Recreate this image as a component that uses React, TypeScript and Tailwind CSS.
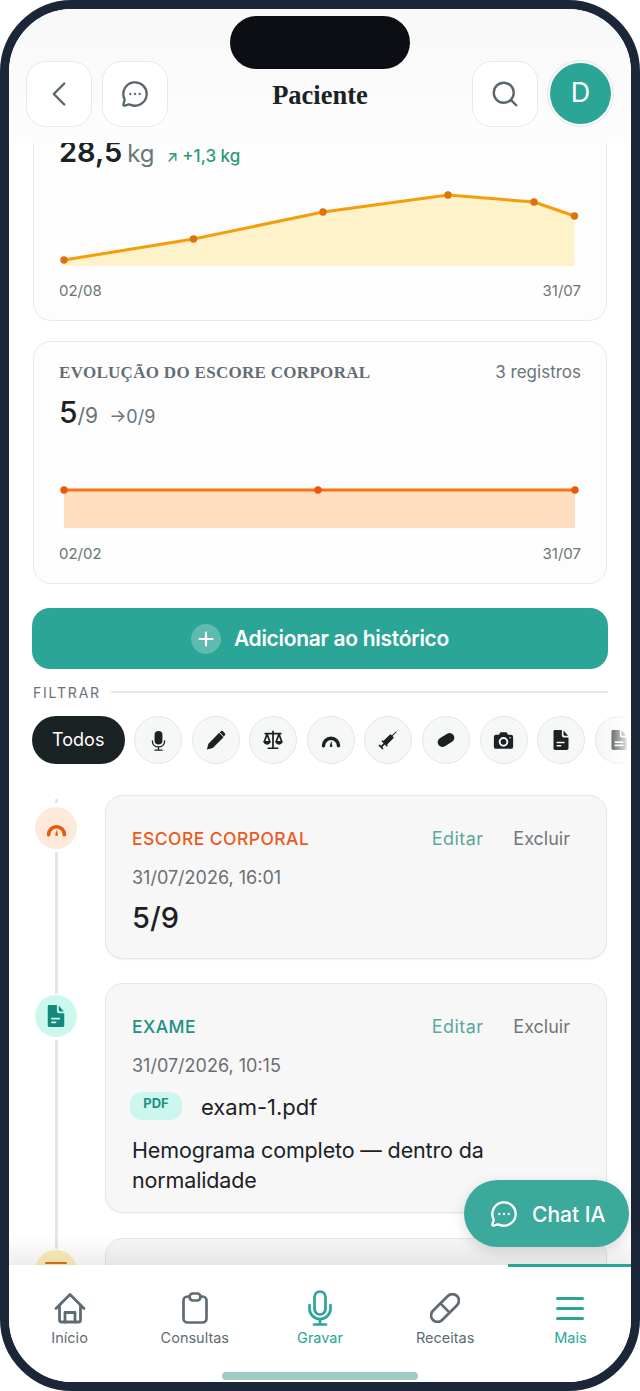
import React from "react";
import { ChevronLeft, MessageCircleMore, Search } from "lucide-react";

const sans = "font-['Inter','Noto_Sans',sans-serif]";

function Chart({ pts, w, h, base, stroke, fill, dot }: { pts: number[][]; w: number; h: number; base: number; stroke: string; fill: string; dot: string }) {
  const line = pts.map((p) => p.join(",")).join(" ");
  const area = `${pts[0][0]},${base} ${line} ${pts[pts.length - 1][0]},${base}`;
  return (
    <svg width={w} height={h} viewBox={`0 0 ${w} ${h}`} className="block">
      <polygon points={area} fill={fill} />
      <polyline points={line} fill="none" stroke={stroke} strokeWidth="3" />
      {pts.map((p, i) => (
        <circle key={i} cx={p[0]} cy={p[1]} r="3.7" fill={dot} />
      ))}
    </svg>
  );
}

const ic = "#1c2224";
const MicIcon = () => (
  <svg width="21" height="21" viewBox="0 0 24 24" fill="none">
    <rect x="7.5" y="1" width="9" height="15.5" rx="4.5" fill={ic} />
    <path d="M5 12.5c0 4 3 6.8 7 6.8s7-2.8 7-6.8M12 19.5v3M8 23h8" stroke={ic} strokeWidth="1.5" strokeLinecap="round" />
  </svg>
);
const PenIcon = () => (
  <svg width="23" height="23" viewBox="0 0 24 24">
    <path d="M3 21.5l1.6-6.2L15.8 4l4.6 4.6L9.2 19.8z" fill={ic} />
    <path d="M17.3 2.6a2 2 0 0 1 2.8 0l1.5 1.5a2 2 0 0 1 0 2.8l-.9.9-4.3-4.3z" fill={ic} />
  </svg>
);
const ScaleIcon = () => (
  <svg width="22" height="22" viewBox="0 0 24 24" fill="none" stroke={ic} strokeWidth="1.9" strokeLinejoin="round" strokeLinecap="round">
    <path d="M12 2.5v18M7 21h10M3.5 5h17" />
    <path d="M5.5 5.5L2.5 14h6zM18.5 5.5l-3 8.5h6z" />
    <path d="M2.5 14c.5 1.6 1.6 2.3 3 2.3s2.5-.7 3-2.3M15.5 14c.5 1.6 1.6 2.3 3 2.3s2.5-.7 3-2.3" fill={ic} />
  </svg>
);
const GaugeIcon = ({ c = ic, s = 20 }: { c?: string; s?: number }) => (
  <svg width={s} height={s} viewBox="0 0 24 24" fill="none">
    <path d="M3 19a9 9 0 0 1 18 0" stroke={c} strokeWidth="4.2" strokeLinecap="round" />
    <path d="M12.5 13l1 5.5a1.5 1.5 0 1 1-2.8 0z" fill={c} />
  </svg>
);
const SyringeIcon = () => (
  <svg width="24" height="24" viewBox="0 0 24 24" fill={ic}>
    <g transform="rotate(45 12 12)">
      <rect x="11.5" y="0" width="1" height="7" />
      <rect x="9.4" y="6" width="5.2" height="11" rx="1" />
      <rect x="8" y="16" width="8" height="1.5" rx="0.7" />
      <rect x="11.1" y="17" width="1.8" height="5" />
      <rect x="9" y="21" width="6" height="1.7" rx="0.8" />
    </g>
  </svg>
);
const PillIcon = () => (
  <svg width="24" height="24" viewBox="0 0 24 24">
    <rect x="3" y="7.3" width="18" height="9.4" rx="4.7" transform="rotate(-32 12 12)" fill={ic} />
  </svg>
);
const CameraIcon = () => (
  <svg width="21" height="21" viewBox="0 0 24 24">
    <path fillRule="evenodd" d="M8.5 2.5h7l1.8 3h3.2a2.5 2.5 0 0 1 2.5 2.5v11a2.5 2.5 0 0 1-2.5 2.5h-17A2.5 2.5 0 0 1 1 19V8a2.5 2.5 0 0 1 2.5-2.5h3.2zM12 8a5.5 5.5 0 1 0 0 11 5.5 5.5 0 0 0 0-11zm0 2.2a3.3 3.3 0 1 1 0 6.6 3.3 3.3 0 0 1 0-6.600zM19.5 8a.9.9 0 1 0 0 1.8.9.9 0 0 0 0-1.800z" fill={ic} />
  </svg>
);
const DocIcon = ({ c = ic, lines = 1, line = "#f5f6f6", w = 20, h = 22 }: { c?: string; lines?: number; line?: string; w?: number; h?: number }) => (
  <svg width={w} height={h} viewBox="0 0 24 26">
    <path d="M4.5 1H13v6.5a2.5 2.5 0 0 0 2.5 2.5H21v13a2 2 0 0 1-2 2H5a2 2 0 0 1-2-2V2.500A1.500 1.500 0 0 1 4.500 1z" fill={c} />
    <path d="M15 1.500L20.500 8h-4a1.500 1.500 0 0 1-1.500-1.500z" fill={c} />
    {lines === 1 ? (
      <>
        <rect x="6.5" y="15" width="10" height="1.8" rx="0.9" fill={line} />
        <rect x="6.5" y="19" width="6" height="1.8" rx="0.9" fill={line} />
      </>
    ) : (
      <>
        <rect x="6.5" y="14.5" width="11" height="2" rx="1" fill={line} />
        <rect x="6.5" y="18.5" width="11" height="2" rx="1" fill={line} />
      </>
    )}
  </svg>
);

const HomeIcon = () => (
  <svg width="32" height="32" viewBox="0 0 32 32" fill="none" stroke="currentColor" strokeWidth="2.8" strokeLinecap="round" strokeLinejoin="round">
    <path d="M2 16.5L16 2.500l14 14" />
    <path d="M5.5 13.5V28a2 2 0 0 0 2 2h17a2 2 0 0 0 2-2V13.500" />
    <path d="M11 30v-9.500h10V30" />
  </svg>
);
const ClipIcon = () => (
  <svg width="26" height="32" viewBox="0 0 26 32" fill="none" stroke="currentColor" strokeWidth="2.7" strokeLinejoin="round">
    <rect x="1.5" y="4.5" width="23" height="26" rx="4" />
    <rect x="7.5" y="1.5" width="11" height="7" rx="3.5" fill="#fff" />
  </svg>
);
const MicNav = () => (
  <svg width="24" height="36" viewBox="0 0 24 36" fill="none" stroke="currentColor" strokeWidth="2.7" strokeLinecap="round" strokeLinejoin="round">
    <rect x="6.5" y="1.5" width="11" height="23" rx="5.5" />
    <path d="M1.5 15v3.500a10.500 10.500 0 0 0 21 0V15" />
    <path d="M12 29v5M6 34.500h12" />
  </svg>
);
const PillNav = () => (
  <svg width="30" height="30" viewBox="0 0 30 30" fill="none" stroke="currentColor" strokeWidth="2.7">
    <rect x="-2" y="8.5" width="34" height="13" rx="6.5" transform="rotate(-45 15 15)" />
    <path d="M10.4 10.4l9.2 9.2" />
  </svg>
);
const MenuNav = () => (
  <svg width="28" height="23" viewBox="0 0 28 23" fill="currentColor">
    <rect x="0" y="0" width="28" height="3" rx="1.5" />
    <rect x="0" y="10" width="28" height="3" rx="1.5" />
    <rect x="0" y="20" width="28" height="3" rx="1.5" />
  </svg>
);

const Chip = ({ children }: { children: React.ReactNode }) => (
  <div className="w-12 h-12 shrink-0 rounded-full bg-[#f6f7f7] border border-[#e6e6e6] flex items-center justify-center">{children}</div>
);

function EntryHead({ label, color }: { label: string; color: string }) {
  return (
    <div className="flex items-center h-6">
      <span className={`text-[17.5px] font-medium tracking-[0.45px] ${color}`}>{label}</span>
      <span className="ml-auto -mt-[2px] text-[18px] tracking-[0.4px] text-[#5aa89e]">Editar</span>
      <span className="ml-[30px] mr-[10px] -mt-[2px] text-[18px] text-[#737678]">Excluir</span>
    </div>
  );
}

function NavItem({ icon, label, active }: { icon: React.ReactNode; label: string; active?: boolean }) {
  return (
    <div className={`flex-1 flex flex-col items-center pt-[25px] ${active ? "text-[#2aa596]" : "text-[#5f6b73]"}`}>
      <div className="h-[36px] flex items-center justify-center">{icon}</div>
      <span className="text-[14.5px] leading-[18px] mt-[3px]">{label}</span>
    </div>
  );
}

export default function App() {
  return (
    <div className={`w-[640px] h-[1391px] bg-white relative overflow-hidden ${sans}`}>
      <div className="absolute inset-0 rounded-[72px] border-[9px] border-[#1c2639] overflow-hidden flex flex-col bg-white">
        {/* Header */}
        <div className="h-[134px] shrink-0 bg-gradient-to-b from-[#f8f8f8] to-[#fdfdfd] flex items-start pl-[17px] pr-[17px] pt-[52px] z-10">
          <div className="w-[66px] h-[66px] rounded-[20px] bg-white border border-[#e8e8e8] flex items-center justify-center text-[#59666e]">
            <ChevronLeft size={42} strokeWidth={1.4} />
          </div>
          <div className="ml-[10px] w-[66px] h-[66px] rounded-[20px] bg-white border border-[#e8e8e8] flex items-center justify-center text-[#59666e]">
            <MessageCircleMore size={28} strokeWidth={2} />
          </div>
          <div className="flex-1 text-center h-[66px] flex items-center justify-center font-['Liberation_Serif',serif] font-bold text-[26.5px] text-[#1c2224] pt-[3px]">Paciente</div>
          <div className="w-[66px] h-[66px] rounded-[20px] bg-white border border-[#e8e8e8] flex items-center justify-center text-[#59666e]">
            <Search size={30} strokeWidth={1.9} />
          </div>
          <div className="ml-[9px] w-[67px] h-[67px] -mt-[1px] rounded-full border border-[#e4e4e4] flex items-center justify-center">
            <div className="w-[61px] h-[61px] rounded-full bg-[#2aa596] text-white text-[27px] flex items-center justify-center">D</div>
          </div>
        </div>

        {/* Scroll area */}
        <div className="flex-1 min-h-0 overflow-hidden relative">
          <div className="px-[24px]">
            {/* Card 1 */}
            <div className="h-[193px] -mt-[15px] rounded-[18px] bg-[#fdfdfd] border border-[#e8e8e8] px-[25px] flex flex-col">
              <div className="h-[40px] flex items-baseline gap-[12px] mt-[1px] text-[#1c2224]">
                <div className="flex items-baseline">
                  <span className="text-[29px] font-semibold">28,5</span>
                  <span className="text-[24px] text-[#6b7478] ml-[5px]">kg</span>
                </div>
                <span className="flex items-baseline gap-[4px] text-[17px] text-[#2c9a77] font-medium">
                  <span className="text-[15px]">↗</span>+1,3 kg
                </span>
              </div>
              <div className="-ml-[1px] -mt-[14px] h-[118px]">
                <Chart w={530} h={118} base={110} stroke="#f59e0b" fill="#fdf2c9" dot="#d9730d"
                  pts={[[6, 104], [135.5, 83], [265, 56], [390, 39], [476, 46], [516.5, 60]]} />
              </div>
              <div className="flex justify-between text-[15px] text-[#6b7478] mt-[6px]">
                <span>02/08</span>
                <span>31/07</span>
              </div>
            </div>

            {/* Card 2 */}
            <div className="mt-[20px] h-[243px] rounded-[18px] bg-[#fdfdfd] border border-[#e8e8e8] px-[25px] pt-[21px]">
              <div className="flex justify-between items-center h-[20px]">
                <span className="font-['Liberation_Serif',serif] font-bold text-[17px] text-[#646d73] tracking-[0.3px]">EVOLUÇÃO DO ESCORE CORPORAL</span>
                <span className="text-[17px] text-[#6b7478]">3 registros</span>
              </div>
              <div className="flex items-baseline mt-[7px] h-[36px] text-[#1c2224]">
                <span className="text-[30px] font-medium">5</span>
                <span className="text-[21px] text-[#6b7478]">/9</span>
                <span className="text-[18px] text-[#6b7478] ml-[11px]">→0/9</span>
              </div>
              <div className="-ml-[1px] mt-[19px] h-[118px] -mb-[20px]">
                <Chart w={530} h={90} base={83} stroke="#f97316" fill="#fddfc0" dot="#ea580c"
                  pts={[[6, 45], [260, 45], [517, 45]]} />
              </div>
              <div className="flex justify-between text-[15px] text-[#6b7478] -mt-[9px]">
                <span>02/02</span>
                <span>31/07</span>
              </div>
            </div>

            {/* Add button */}
            <div className="mt-[24px] h-[61px] rounded-[18px] bg-[#2aa596] flex items-center justify-center gap-[13px] -mx-[1px]">
              <div className="w-[30px] h-[30px] rounded-full bg-white/25 flex items-center justify-center">
                <svg width="16" height="16" viewBox="0 0 16 16"><path d="M8 1.5v13M1.5 8h13" stroke="#fff" strokeWidth="2.2" strokeLinecap="round" /></svg>
              </div>
              <span className="text-white text-[21px] font-semibold tracking-[-0.3px] pt-[1px]">Adicionar ao histórico</span>
            </div>

            {/* Filter */}
            <div className="mt-[13px] flex items-center gap-[10px] -mx-[1px] h-[20px]">
              <span className="text-[14px] tracking-[1.8px] text-[#66727a] ml-[1px]">FILTRAR</span>
              <div className="flex-1 h-[2px] bg-[#e8e8e8]" />
            </div>
            <div className="mt-[14px] flex items-center gap-[9.6px] -ml-[1px] -mr-[24px] relative">
              <div className="h-12 w-[92.5px] shrink-0 rounded-full bg-[#1b2224] text-white text-[18px] flex items-center justify-center pb-[1px]">Todos</div>
              <Chip><MicIcon /></Chip>
              <Chip><PenIcon /></Chip>
              <Chip><ScaleIcon /></Chip>
              <Chip><GaugeIcon /></Chip>
              <Chip><SyringeIcon /></Chip>
              <Chip><PillIcon /></Chip>
              <Chip><CameraIcon /></Chip>
              <Chip><DocIcon /></Chip>
              <Chip><DocIcon lines={2} /></Chip>
              <div className="absolute right-0 top-0 h-12 w-[30px] bg-gradient-to-r from-white/0 to-white" />
            </div>

            {/* Timeline */}
            <div className="mt-[31px] relative">
              <div className="flex">
                <div className="w-[73px] shrink-0 -ml-[1px] flex flex-col items-center pr-[25px] pt-[4px]">
                  <div className="w-[3px] h-[4px] bg-[#e6e6e6]" />
                  <div className="mt-[4px] w-[42px] h-[42px] rounded-full bg-[#fdeadb] flex items-center justify-center"><GaugeIcon c="#ea580c" s={21} /></div>
                  <div className="mt-[3px] w-[3px] flex-1 bg-[#e6e6e6]" />
                </div>
                <div className="flex-1 h-[164px] rounded-[18px] bg-[#f7f7f7] border border-[#e6e6e6] shadow-[0_1px_2px_rgba(0,0,0,0.05)] px-[26px] pt-[31px]">
                  <EntryHead label="ESCORE CORPORAL" color="text-[#ea5a1c]" />
                  <div className="mt-[15px] text-[18px] leading-[24px] text-[#6a6f73]">31/07/2026, 16:01</div>
                  <div className="mt-[10px] text-[29px] leading-[36px] font-medium text-[#1c2224]">5/9</div>
                </div>
              </div>
              <div className="flex">
                <div className="w-[73px] shrink-0 -ml-[1px] flex flex-col items-center pr-[25px]">
                  <div className="w-[3px] h-[35px] bg-[#e6e6e6]" />
                  <div className="mt-[1px] w-[42px] h-[42px] rounded-full bg-[#ccf7ef] flex items-center justify-center"><DocIcon c="#12897b" line="#ccf7ef" w={22} h={24} /></div>
                  <div className="mt-[3px] w-[3px] flex-1 bg-[#e6e6e6]" />
                </div>
                <div className="flex-1 mt-[24px] h-[230px] rounded-[18px] bg-[#f7f7f7] border border-[#e6e6e6] shadow-[0_1px_2px_rgba(0,0,0,0.05)] px-[26px] pt-[31px]">
                  <EntryHead label="EXAME" color="text-[#1f9183]" />
                  <div className="mt-[15px] text-[18px] leading-[24px] text-[#6a6f73]">31/07/2026, 10:15</div>
                  <div className="mt-[14px] flex items-start h-[30px]">
                    <div className="w-[52px] h-[28px] -ml-[2px] rounded-[12px] bg-[#ccf7ef] text-[#1f9183] text-[13px] font-bold text-center leading-[22px]">PDF</div>
                    <span className="ml-[19px] text-[22px] leading-[30px] text-[#1c2224]">exam-1.pdf</span>
                  </div>
                  <div className="mt-[13px] text-[21.5px] leading-[30px] text-[#1c2224] tracking-[-0.15px]">Hemograma completo — dentro da normalidade</div>
                </div>
              </div>
              <div className="flex">
                <div className="w-[73px] shrink-0 -ml-[1px] flex flex-col items-center pr-[25px]">
                  <div className="w-[3px] h-[36px] bg-[#e6e6e6]" />
                  <div className="mt-[1px] w-[42px] h-[42px] rounded-full bg-[#fdeeb9] flex justify-center pt-[12px]">
                    <div className="w-[22px] h-[2px] bg-[#e2730f] rounded-full" />
                  </div>
                </div>
                <div className="flex-1 mt-[25px] h-[200px] rounded-[18px] bg-[#f7f7f7] border border-[#e6e6e6]" />
              </div>
            </div>
          </div>
          <div className="absolute left-0 right-0 bottom-0 h-[30px] bg-gradient-to-b from-black/0 to-black/[0.07]" />
        </div>

        {/* Nav */}
        <div className="h-[117px] shrink-0 bg-white flex relative z-10 -mx-[2px]">
          <div className="absolute right-[2px] -top-[1px] h-[3px] w-[123px] bg-[#2aa596]" />
          <NavItem label="Início" icon={<HomeIcon />} />
          <NavItem label="Consultas" icon={<ClipIcon />} />
          <NavItem active label="Gravar" icon={<MicNav />} />
          <NavItem label="Receitas" icon={<PillNav />} />
          <NavItem active label="Mais" icon={<MenuNav />} />
          <div className="absolute left-[215px] bottom-[2px] w-[196px] h-[8px] rounded-full bg-[#9ecbc5]" />
        </div>
      </div>

      {/* Dynamic island */}
      <div className="absolute z-20 left-[230px] top-[16px] w-[180px] h-[53px] rounded-full bg-[#0b0f14]" />

      {/* Chat IA */}
      <div className="absolute z-20 left-[464px] top-[1180px] w-[165px] h-[67px] rounded-full bg-[#3ba99c] shadow-[0_4px_14px_rgba(0,0,0,0.14)] flex items-center pl-[26px] gap-[14px] text-white">
        <MessageCircleMore size={28} strokeWidth={2} />
        <span className="text-[21px] font-medium pt-[2px]">Chat IA</span>
      </div>
    </div>
  );
}
